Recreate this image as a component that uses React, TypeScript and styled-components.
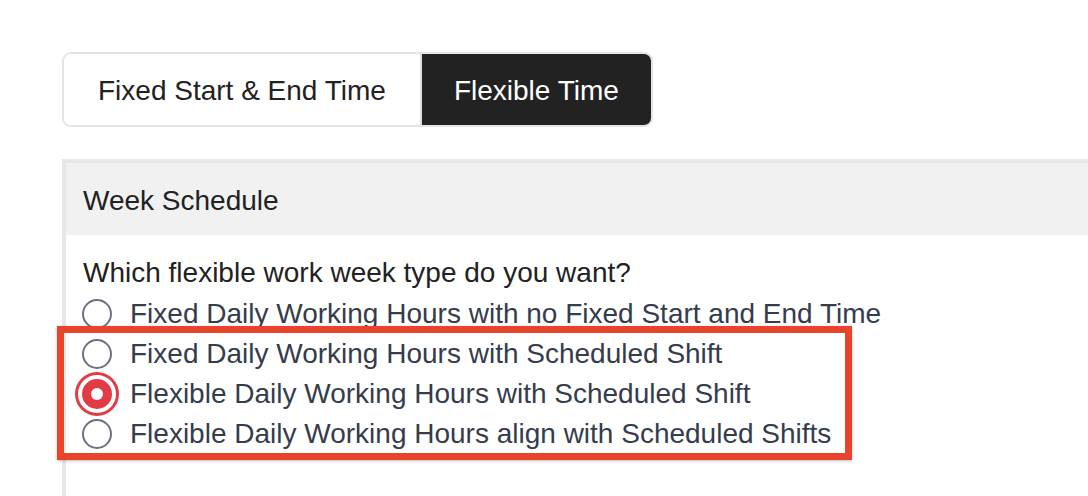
import React, { useState } from "react";
import styled, { createGlobalStyle } from "styled-components";

const Global = createGlobalStyle`
  html, body { margin: 0; padding: 0; background: #fff; overflow: hidden; }
  body { font-family: "Liberation Sans", Arial, sans-serif; }
`;

const Page = styled.div`
  padding: 52px 0 0 62px;
  width: 1088px;
  height: 496px;
  box-sizing: border-box;
  overflow: hidden;
`;

const TabGroup = styled.div`
  display: inline-flex;
  border: 2px solid #e3e3e8;
  border-radius: 9px;
  overflow: hidden;
  height: 75px;
  box-sizing: border-box;
`;

const Tab = styled.button<{ $active?: boolean }>`
  display: flex;
  align-items: center;
  border: none;
  margin: 0;
  padding: 2px ${(p) => (p.$active ? "32px" : "34px")} 0;
  font-family: inherit;
  font-size: 28px;
  background: ${(p) => (p.$active ? "#222222" : "#ffffff")};
  color: ${(p) => (p.$active ? "#ffffff" : "#222222")};
  border-left: ${(p) => (p.$active ? "2px solid #dcdce2" : "none")};
  cursor: pointer;
`;

const Panel = styled.div`
  margin-top: 32px;
  width: 1100px;
  border: 4px solid #e6e6eb;
  border-right: none;
  border-bottom: none;
  height: 400px;
`;

const PanelHeader = styled.div`
  background: #f1f1f1;
  height: 72px;
  box-sizing: border-box;
  display: flex;
  align-items: center;
  padding: 4px 0 0 17px;
  font-size: 28px;
  color: #222;
`;

const PanelBody = styled.div`
  padding: 18px 0 0 16px;
  position: relative;
`;

const Question = styled.div`
  font-size: 28px;
  line-height: 40px;
  color: #222;
  padding-left: 1px;
`;

const Options = styled.div`
  position: relative;
  display: flex;
  flex-direction: column;
  margin-top: 1px;
`;

const OptionRow = styled.label`
  display: flex;
  align-items: center;
  height: 40px;
  gap: 18px;
  font-size: 28px;
  color: #353c4c;
  cursor: pointer;
`;

const Radio = styled.span<{ $checked?: boolean }>`
  width: 30px;
  height: 30px;
  border-radius: 50%;
  box-sizing: border-box;
  flex: none;
  display: flex;
  align-items: center;
  justify-content: center;
  border: ${(p) => (p.$checked ? "none" : "2px solid #6c7180")};
  background: ${(p) => (p.$checked ? "#e23b46" : "#fff")};
  box-shadow: ${(p) => (p.$checked ? "0 0 0 4px #fff, 0 0 0 7px #e23b46" : "none")};
  &::after {
    content: "";
    display: ${(p) => (p.$checked ? "block" : "none")};
    width: 12px;
    height: 12px;
    border-radius: 50%;
    background: #fff;
  }
`;

const Highlight = styled.div`
  position: absolute;
  left: -25px;
  top: 32px;
  width: 795px;
  height: 134px;
  box-sizing: border-box;
  border: 7px solid #e8442b;
  box-shadow: 0 1px 3px rgba(0, 0, 0, 0.25);
  pointer-events: none;
`;

const options = [
  "Fixed Daily Working Hours with no Fixed Start and End Time",
  "Fixed Daily Working Hours with Scheduled Shift",
  "Flexible Daily Working Hours with Scheduled Shift",
  "Flexible Daily Working Hours align with Scheduled Shifts",
];

export default function App() {
  const [tab, setTab] = useState(1);
  const [sel, setSel] = useState(2);
  return (
    <>
      <Global />
      <Page>
        <TabGroup>
          <Tab $active={tab === 0} onClick={() => setTab(0)}>
            Fixed Start &amp; End Time
          </Tab>
          <Tab $active={tab === 1} onClick={() => setTab(1)}>
            Flexible Time
          </Tab>
        </TabGroup>
        <Panel>
          <PanelHeader>Week Schedule</PanelHeader>
          <PanelBody>
            <Question>Which flexible work week type do you want?</Question>
            <Options>
              {options.map((o, i) => (
                <OptionRow key={o} onClick={() => setSel(i)}>
                  <Radio $checked={sel === i} />
                  {o}
                </OptionRow>
              ))}
              <Highlight />
            </Options>
          </PanelBody>
        </Panel>
      </Page>
    </>
  );
}
